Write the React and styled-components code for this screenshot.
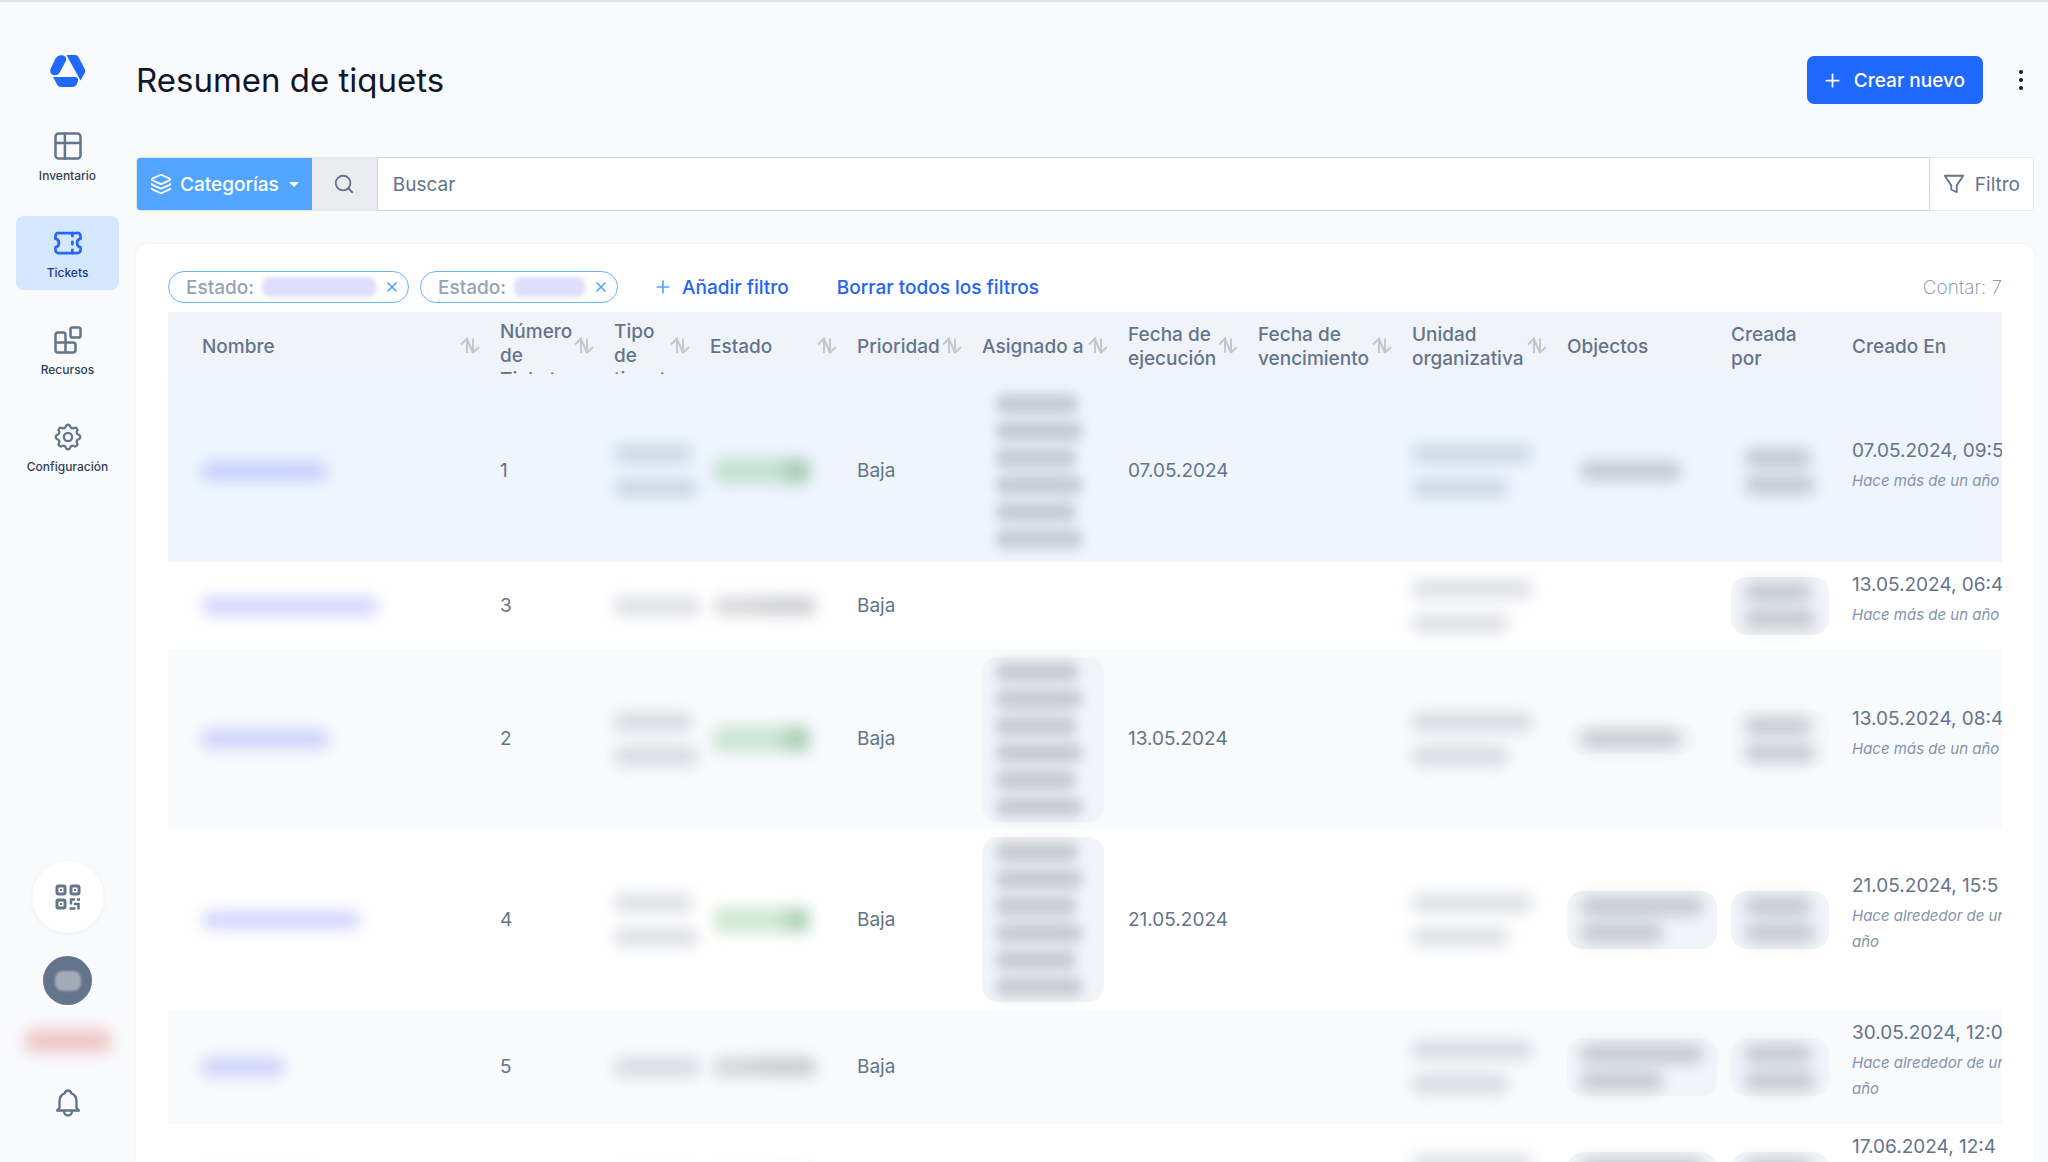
import styled, { createGlobalStyle, css } from 'styled-components'
import { Layers, Plus, Search, X } from 'lucide-react'

const GlobalStyle = createGlobalStyle`
  * { box-sizing: border-box; }
  body {
    margin: 0;
    background: #f9fafc;
    color: #64748b;
    font-family: Inter, 'Liberation Sans', sans-serif;
    font-size: 19px;
  }
  button, input { font: inherit; color: inherit; }
  button { border: 0; background: none; padding: 0; cursor: pointer; }
  a { color: inherit; text-decoration: none; }
`

const Page = styled.div`
  display: flex;
  height: 100vh;
  overflow: hidden;
  border-top: 2px solid #e0e3e8;
`

/* ---------- sidebar ---------- */

const Sidebar = styled.aside`
  display: flex;
  flex-direction: column;
  align-items: center;
  flex: none;
  width: 136px;
  padding: 53px 17px 45px 16px;
`

const Nav = styled.nav`
  display: flex;
  flex-direction: column;
  align-self: stretch;
  gap: 23px;
  margin-top: 32px;
`

const NavLink = styled.a`
  display: flex;
  flex-direction: column;
  align-items: center;
  gap: 5px;
  height: 74px;
  padding-top: 12px;
  border-radius: 8px;
  font-size: 12px;
  font-weight: 500;
  line-height: 20px;
  color: #334155;
  background: ${({ $active }) => ($active ? '#d6e8fe' : 'transparent')};
  ${({ $active }) => $active && css`color: #1e3a8a;`}

  svg {
    flex: none;
    color: ${({ $active }) => ($active ? '#2468fc' : '#64748b')};
  }
`

const SidebarBottom = styled.div`
  display: flex;
  flex-direction: column;
  align-items: center;
  margin-top: auto;
`

const QrButton = styled.button`
  display: grid;
  place-items: center;
  width: 72px;
  height: 72px;
  border-radius: 50%;
  background: #fff;
  box-shadow: 0 1px 4px rgba(15, 23, 42, 0.06);
`

const Avatar = styled.button`
  display: grid;
  place-items: center;
  width: 49px;
  height: 49px;
  margin: 23px 0 24px;
  border-radius: 50%;
  background: #64748b;
`

const BellButton = styled.button`
  display: grid;
  place-items: center;
  margin-top: 36px;
`

/* ---------- header ---------- */

const Main = styled.main`
  display: flex;
  flex-direction: column;
  flex: 1;
  min-width: 0;
  padding: 54px 14px 0 0;
`

const Header = styled.header`
  display: flex;
  align-items: center;
  flex: none;
  height: 48px;
`

const Title = styled.h1`
  flex: 1;
  margin: 0;
  font-size: 33px;
  font-weight: 400;
  line-height: 40px;
  color: #0f172a;
`

const CreateButton = styled.button`
  display: flex;
  align-items: center;
  gap: 11px;
  height: 48px;
  padding: 0 18px 0 15px;
  border-radius: 7px;
  background: #2168ff;
  color: #fff;
  font-weight: 500;
`

const MoreButton = styled.button`
  display: flex;
  flex-direction: column;
  align-items: center;
  gap: 4px;
  width: 26px;
  margin-left: 25px;

  i {
    width: 4px;
    height: 4px;
    border-radius: 50%;
    background: #0f172a;
  }
`

const SearchBar = styled.form`
  display: flex;
  flex: none;
  height: 54px;
  margin: 53px 0 33px;
  border: 1px solid #e4e7ec;
  border-radius: 4px;
`

const CategoryButton = styled.button`
  display: flex;
  align-items: center;
  gap: 8px;
  padding: 0 13px;
  border-radius: 3px 0 0 3px;
  background: #51a4ff;
  color: #fff;
  font-weight: 500;

  &::after {
    content: '';
    margin-left: 2px;
    border: 5px solid transparent;
    border-top-color: #fff;
    border-bottom: 0;
  }
`

const SearchButton = styled.button`
  display: grid;
  place-items: center;
  width: 65px;
  background: #ebecf0;
`

const SearchInput = styled.input`
  flex: 1;
  min-width: 0;
  margin: -1px 0;
  padding: 0 15px;
  border: 1px solid #d0d3d9;
  border-radius: 0;
  outline: none;
  background: #fff;

  &::placeholder { color: #64748b; opacity: 1; }
`

const FilterButton = styled.button`
  display: flex;
  align-items: center;
  gap: 10px;
  padding: 0 13px;
  border-radius: 0 3px 3px 0;
  background: #fff;
`

/* ---------- card and filters ---------- */

const Card = styled.section`
  display: flex;
  flex-direction: column;
  flex: 1;
  min-height: 0;
  padding: 27px 32px 0;
  border-radius: 12px 12px 0 0;
  background: #fff;
  box-shadow: 0 0 3px rgba(15, 23, 42, 0.06);
`

const Filters = styled.div`
  display: flex;
  align-items: center;
  flex: none;
  height: 32px;
  margin-bottom: 9px;
`

const Chip = styled.span`
  display: flex;
  align-items: center;
  gap: 8px;
  height: 32px;
  margin-right: 11px;
  padding: 0 8px 0 17px;
  border: 1px solid #6db3fb;
  border-radius: 16px;
  color: #94a3b8;
  font-weight: 500;

  button { display: flex; color: #51a4ff; }
`

const FilterAction = styled.button`
  display: flex;
  align-items: center;
  gap: 9px;
  margin-left: ${({ $first }) => ($first ? '24px' : '48px')};
  color: #2563fb;
  font-weight: 500;

  svg { color: #51a4ff; }
`

const Count = styled.span`
  margin-left: auto;
  font-weight: 200;
  color: #7c8ba1;
`

/* ---------- table ---------- */

const TableScroll = styled.div`
  flex: 1;
  min-height: 0;
  overflow: auto;
  scrollbar-width: none;
`

const Table = styled.table`
  width: 100%;
  min-width: 1864px;
  table-layout: fixed;
  border-collapse: separate;
  border-spacing: 0;
`

const Th = styled.th`
  height: 68px;
  padding: 8px 10px 0;
  border-bottom: 6px solid #eef5fd;
  background: #f0f4fa;
  text-align: left;
  font-weight: 500;

  &:first-child { padding-left: 34px; }
`

const ThInner = styled.div`
  display: flex;
  align-items: safe center;
  justify-content: space-between;
  height: 54px;
  overflow: hidden;
  line-height: 24px;
`

const SortButton = styled.button`
  display: flex;
  flex: none;
  align-self: center;
  padding-bottom: 3px;
  color: #c3c8d0;
`

const rowColors = { selected: '#eef5fd', plain: '#fff', striped: '#f8fafc' }

const Row = styled.tr`
  height: ${({ $height }) => $height}px;
  background: ${({ $tone }) => rowColors[$tone]};
`

const Td = styled.td`
  padding: 7px 10px;
  line-height: 34px;

  &:first-child { padding-left: 34px; }
`

const Created = styled.div`
  height: ${({ $tall }) => ($tall ? '98px' : '71px')};
  line-height: 30px;
  white-space: nowrap;

  em {
    display: block;
    margin-top: 2px;
    font-size: 15px;
    line-height: 26px;
    color: #8593ab;
    white-space: normal;
  }
`

/* ---------- redacted values ---------- */

const Smudge = styled.span`
  display: block;
  width: ${({ $w }) => $w}px;
  height: ${({ $h }) => $h || 20}px;
  border-radius: 8px;
  background: ${({ $color }) => $color || 'rgba(100, 112, 130, 0.2)'};
  filter: blur(${({ $blur }) => $blur || 7}px);
`

const StatusSmudge = styled(Smudge)`
  margin-left: 4px;
`

const Lines = styled.div`
  display: grid;
  gap: 14px;
`

const Tile = styled.div`
  display: grid;
  align-content: center;
  gap: 7px;
  min-height: ${({ $h }) => $h || 58}px;
  padding: 0 14px;
  margin-right: ${({ $gap }) => $gap || 0}px;
  border-radius: 16px;
  background: ${({ $faint }) => ($faint ? 'rgba(241, 245, 250, 0.4)' : '#f1f5fa')};
`

const linkTone = 'rgba(105, 120, 255, 0.28)'
const tileTone = 'rgba(90, 94, 102, 0.27)'
const greenTone = 'linear-gradient(90deg, rgba(120, 190, 130, 0.34) 68%, rgba(95, 165, 110, 0.46) 78%)'
const greyTone = 'linear-gradient(90deg, rgba(80, 84, 92, 0.2) 20%, rgba(80, 84, 92, 0.26) 60%)'

/* ---------- icons ---------- */

const Stroke = ({ size = 30, width = 2, children }) => (
  <svg width={size} height={size} viewBox="0 0 24 24" fill="none" stroke="currentColor"
    strokeWidth={width} strokeLinecap="round" strokeLinejoin="round" aria-hidden="true">
    {children}
  </svg>
)

const Logo = () => (
  <svg width="36" height="32" viewBox="0 0 36 32" fill="#2168ff" role="img" aria-label="Inicio">
    <path d="M10.500 .2H12.500Q16.800 1 16 5.500L9.800 17.500Q8 20.500 4.200 20.300Q-.8 19.300 .5 14L5.500 3.500Q7.200 .4 10.500 .2Z" />
    <path d="M16.500 0H25.500Q27.500 0 28.500 2L34.900 14.200Q35.700 16 34.900 17.800L30.500 25.500Z" />
    <path d="M3 22H25Q28 22.300 28.200 25Q28.200 26.500 26.500 29.700Q25.200 32 22.500 32H11Q8.500 32 7.300 30Z" />
  </svg>
)

const InventoryIcon = () => (
  <Stroke><rect x="2" y="2" width="20" height="20" rx="2.500" /><path d="M2 9.500h20M9.500 2v20" /></Stroke>
)

const TicketIcon = () => (
  <Stroke width={2.200}>
    <path d="M4.500 4h15A2.300 2.300 0 0 1 22 6.300v2.200a3.600 3.600 0 0 0 0 7v2.200A2.300 2.300 0 0 1 19.500 20h-15A2.300 2.300 0 0 1 2 17.700v-2.200a3.600 3.600 0 0 0 0-7V6.300A2.300 2.300 0 0 1 4.500 4z" />
    <path d="M15.500 4v2.500M15.500 11v2M15.500 17.500V20" />
  </Stroke>
)

const ResourcesIcon = () => (
  <Stroke>
    <rect x="14" y="2" width="8" height="8" rx="1.500" />
    <path d="M10 14V8a2 2 0 0 0-2-2H4a2 2 0 0 0-2 2v12a2 2 0 0 0 2 2h12a2 2 0 0 0 2-2v-4a2 2 0 0 0-2-2H2M10 14v8" />
  </Stroke>
)

const SettingsIcon = () => (
  <svg width="30" height="30" viewBox="1 1 22 22" fill="none" stroke="currentColor" strokeWidth="1.700"
    strokeLinecap="round" strokeLinejoin="round" aria-hidden="true">
    <path d="M10.325 4.317c.426-1.756 2.924-1.756 3.350 0a1.724 1.724 0 0 0 2.573 1.066c1.543-.94 3.310.826 2.370 2.370a1.724 1.724 0 0 0 1.065 2.572c1.756.426 1.756 2.924 0 3.350a1.724 1.724 0 0 0-1.066 2.573c.94 1.543-.826 3.310-2.370 2.370a1.724 1.724 0 0 0-2.572 1.065c-.426 1.756-2.924 1.756-3.350 0a1.724 1.724 0 0 0-2.573-1.066c-1.543.94-3.310-.826-2.370-2.370a1.724 1.724 0 0 0-1.065-2.572c-1.756-.426-1.756-2.924 0-3.350a1.724 1.724 0 0 0 1.066-2.573c-.94-1.543.826-3.310 2.370-2.370 1 .608 2.296.07 2.572-1.065z" />
    <circle cx="12" cy="12" r="3" />
  </svg>
)

const QrIcon = () => (
  <svg width="26" height="26" viewBox="0 0 26 26" fill="none" stroke="#64748b" strokeWidth="3" aria-hidden="true">
    <rect x="2" y="2" width="8" height="8" rx="1.500" />
    <rect x="16" y="2" width="8" height="8" rx="1.500" />
    <rect x="2" y="16" width="8" height="8" rx="1.500" />
    <path d="M5 6h2M19 6h2M5 20h2" strokeWidth="2" />
    <path d="M22 15.500h3M20 15.500h-4v5M19 20h4.500v5.500M14.500 24.500h6" strokeWidth="2.500" />
  </svg>
)

const BellIcon = () => (
  <svg width="26" height="28" viewBox="0 0 26 28" fill="none" stroke="#64748b" strokeWidth="2.400"
    strokeLinejoin="round" strokeLinecap="round" aria-hidden="true">
    <path d="M2 21.500H24L21.500 19V12.500C21.500 8.500 19.500 5.500 16 4.200C15.600 .6 10.400 .6 10 4.200C6.500 5.500 4.500 8.500 4.500 12.500V19Z" />
    <path d="M9 22C9 28 17 28 17 22" />
  </svg>
)

const FunnelIcon = () => (
  <Stroke size={22}><path d="M2 3h20l-7 10.500V21l-6-3v-4.500z" /></Stroke>
)

const SortIcon = () => (
  <svg width="20" height="18" viewBox="0 0 20 18" fill="none" stroke="currentColor" strokeWidth="2" aria-hidden="true">
    <path d="M1 7.500L7 1.500V16M7 2L13 16V1.500M12.500 16L19 10" />
  </svg>
)

/* ---------- data ---------- */

const navItems = [
  { label: 'Inventario', Icon: InventoryIcon },
  { label: 'Tickets', Icon: TicketIcon, active: true },
  { label: 'Recursos', Icon: ResourcesIcon },
  { label: 'Configuración', Icon: SettingsIcon },
]

const columns = [
  { label: 'Nombre', sortable: true },
  { label: 'Número de Tickets', sortable: true, width: 114 },
  { label: 'Tipo de tiquet', sortable: true, width: 96 },
  { label: 'Estado', sortable: true, width: 147 },
  { label: 'Prioridad', sortable: true, width: 125 },
  { label: 'Asignado a', sortable: true, width: 146 },
  { label: 'Fecha de ejecución', sortable: true, width: 130 },
  { label: 'Fecha de vencimiento', sortable: true, width: 154 },
  { label: 'Unidad organizativa', sortable: true, width: 155 },
  { label: 'Objectos', width: 164 },
  { label: 'Creada por', width: 121 },
  { label: 'Creado En', width: 190 },
]

const YEAR_PLUS = 'Hace más de un año'
const YEAR_ABOUT = 'Hace alrededor de un año'

const tickets = [
  { id: 1, tone: 'selected', height: 182, name: 124, type: [78, 84], closed: true, assigned: true, due: '07.05.2024', objects: [100], faint: true, created: '07.05.2024, 09:5', ago: YEAR_PLUS },
  { id: 3, tone: 'plain', height: 87, name: 176, type: [86], created: '13.05.2024, 06:4', ago: YEAR_PLUS },
  { id: 2, tone: 'striped', height: 180, name: 126, type: [78, 84], closed: true, assigned: true, due: '13.05.2024', objects: [100], faint: true, created: '13.05.2024, 08:4', ago: YEAR_PLUS },
  { id: 4, tone: 'plain', height: 181, name: 158, type: [78, 84], closed: true, assigned: true, due: '21.05.2024', objects: [122, 82], created: '21.05.2024, 15:5', ago: YEAR_ABOUT },
  { id: 5, tone: 'striped', height: 114, name: 82, type: [86], objects: [122, 82], created: '30.05.2024, 12:0', ago: YEAR_ABOUT },
  { id: 6, tone: 'plain', height: 114, name: 120, type: [86], objects: [122, 82], created: '17.06.2024, 12:4', ago: YEAR_ABOUT },
]

/* ---------- parts ---------- */

const Redacted = ({ widths }) => (
  <Lines aria-hidden="true">
    {widths.map((w, i) => <Smudge key={i} $w={w} />)}
  </Lines>
)

const TicketRow = ({ ticket }) => {
  const { id, tone, height, name, type, closed, assigned, due, objects, faint, created, ago } = ticket

  return (
    <Row $tone={tone} $height={height}>
      <Td><a href="#ticket" aria-label={`Ticket ${id}`}><Smudge $w={name} $color={linkTone} /></a></Td>
      <Td>{id}</Td>
      <Td><Redacted widths={type} /></Td>
      <Td>
        {closed
          ? <StatusSmudge $w={96} $h={26} $color={greenTone} />
          : <StatusSmudge $w={102} $color={greyTone} />}
      </Td>
      <Td>Baja</Td>
      <Td>
        {assigned && (
          <Tile $h={165} $gap={4} $faint={tone === 'selected'}>
            {[82, 86, 80, 86, 80, 86].map((w, i) => <Smudge key={i} $w={w} $color={tileTone} $blur={6} />)}
          </Tile>
        )}
      </Td>
      <Td>{due}</Td>
      <Td />
      <Td><Redacted widths={[120, 96]} /></Td>
      <Td>
        {objects && (
          <Tile $h={faint ? 30 : 58} $gap={faint ? 14 : -6} $faint={faint}>
            {objects.map((w, i) => <Smudge key={i} $w={w} $color={tileTone} />)}
          </Tile>
        )}
      </Td>
      <Td>
        <Tile $gap={3} $faint={tone === 'selected' || faint}>
          <Smudge $w={66} $color={tileTone} />
          <Smudge $w={70} $color={tileTone} />
        </Tile>
      </Td>
      <Td>
        <Created $tall={ago === YEAR_ABOUT}>
          {created}
          <em>{ago}</em>
        </Created>
      </Td>
    </Row>
  )
}

const App = () => (
  <>
    <GlobalStyle />
    <Page>
      <Sidebar>
        <Logo />
        <Nav>
          {navItems.map(({ label, Icon, active }) => (
            <NavLink key={label} href="#" $active={active}>
              <Icon />
              {label}
            </NavLink>
          ))}
        </Nav>
        <SidebarBottom>
          <QrButton aria-label="Escanear"><QrIcon /></QrButton>
          <Avatar aria-label="Perfil"><Smudge $w={26} $h={20} $blur={1} $color="#a3abb8" /></Avatar>
          <Smudge $w={86} $h={24} $blur={7} $color="#efc9c9" />
          <BellButton aria-label="Notificaciones"><BellIcon /></BellButton>
        </SidebarBottom>
      </Sidebar>

      <Main>
        <Header>
          <Title>Resumen de tiquets</Title>
          <CreateButton><Plus size={21} />Crear nuevo</CreateButton>
          <MoreButton aria-label="Más opciones"><i /><i /><i /></MoreButton>
        </Header>

        <SearchBar>
          <CategoryButton type="button"><Layers size={22} />Categorías</CategoryButton>
          <SearchButton type="button" aria-label="Buscar"><Search size={22} /></SearchButton>
          <SearchInput type="text" placeholder="Buscar" aria-label="Buscar" />
          <FilterButton type="button"><FunnelIcon />Filtro</FilterButton>
        </SearchBar>

        <Card>
          <Filters>
            {[114, 71].map((w) => (
              <Chip key={w}>
                Estado:
                <Smudge $w={w} $blur={2} $color="#dedffa" />
                <button aria-label="Quitar filtro"><X size={16} strokeWidth={2.500} /></button>
              </Chip>
            ))}
            <FilterAction $first><Plus size={20} />Añadir filtro</FilterAction>
            <FilterAction>Borrar todos los filtros</FilterAction>
            <Count>Contar: 7</Count>
          </Filters>

          <TableScroll>
            <Table>
              <colgroup>
                {columns.map(({ label, width }) => <col key={label} width={width} />)}
              </colgroup>
              <thead>
                <tr>
                  {columns.map(({ label, sortable }) => (
                    <Th key={label}>
                      <ThInner>
                        {label}
                        {sortable && <SortButton aria-label={`Ordenar por ${label}`}><SortIcon /></SortButton>}
                      </ThInner>
                    </Th>
                  ))}
                </tr>
              </thead>
              <tbody>
                {tickets.map((ticket) => <TicketRow key={ticket.id} ticket={ticket} />)}
              </tbody>
            </Table>
          </TableScroll>
        </Card>
      </Main>
    </Page>
  </>
)

export default App
